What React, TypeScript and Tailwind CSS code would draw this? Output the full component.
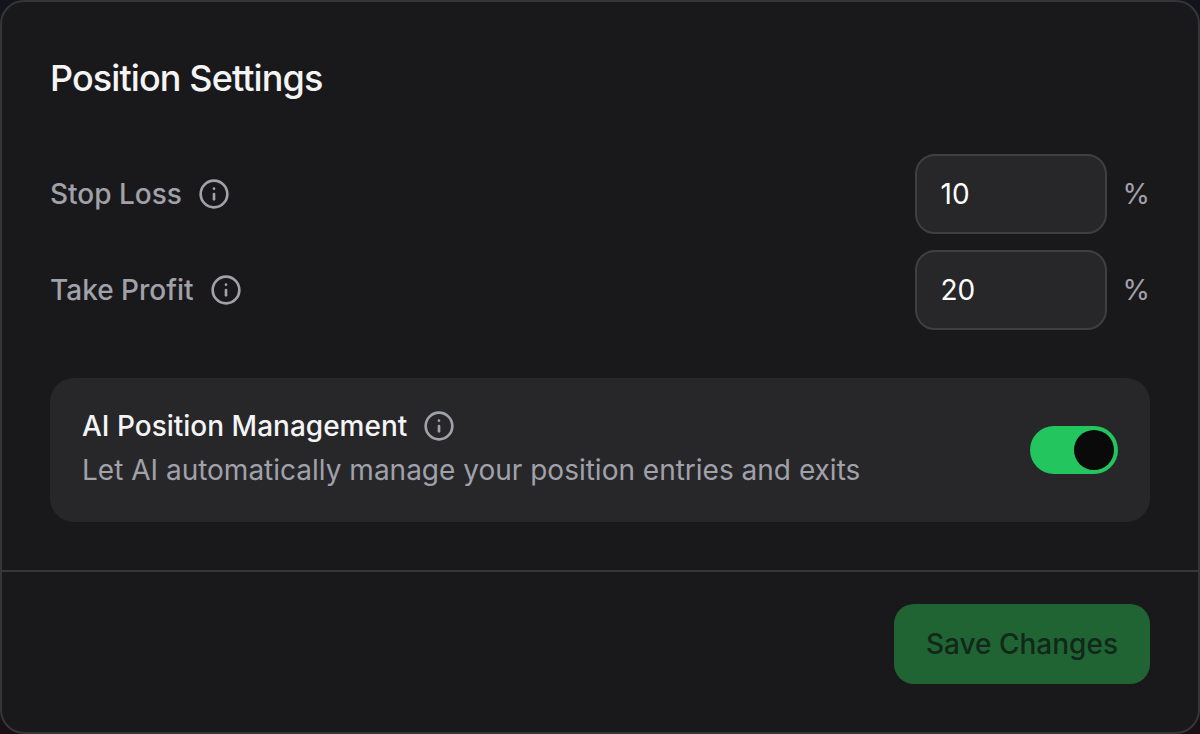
import { useState } from "react";
import { Info } from "lucide-react";

function InfoButton({ label }: { label: string }) {
  return (
    <button type="button" aria-label={label} className="shrink-0 text-[#a1a1aa]">
      <Info className="size-8" aria-hidden="true" />
    </button>
  );
}

function PercentField({
  id,
  label,
  value,
  onChange,
}: {
  id: string;
  label: string;
  value: string;
  onChange: (value: string) => void;
}) {
  return (
    <div className="flex items-center justify-between gap-8">
      <div className="flex items-center gap-4">
        <label htmlFor={id} className="font-medium text-[#a1a1aa]">
          {label}
        </label>
        <InfoButton label={`About ${label}`} />
      </div>
      <div className="flex items-center gap-4">
        <input
          id={id}
          type="text"
          inputMode="decimal"
          value={value}
          onChange={(e) => onChange(e.target.value)}
          className="h-20 w-48 rounded-[20px] border-2 border-[#3f3f42] bg-[#27272a] px-6 text-white outline-none"
        />
        <span className="text-[#a1a1aa]">%</span>
      </div>
    </div>
  );
}

export default function App() {
  const [stopLoss, setStopLoss] = useState("10");
  const [takeProfit, setTakeProfit] = useState("20");
  const [managed, setManaged] = useState(true);

  return (
    <main className="min-h-screen bg-linear-to-b from-[#14141f] to-[#1a1014] font-['Inter',sans-serif] text-[28px] leading-10">
      <form
        onSubmit={(e) => e.preventDefault()}
        className="rounded-3xl border-2 border-[#363638] bg-[#19191b]"
      >
        <div className="flex flex-col gap-12 p-12">
          <h2 className="text-4xl leading-14 font-medium tracking-tight text-zinc-100">
            Position Settings
          </h2>

          <div className="flex flex-col gap-4">
            <PercentField
              id="stop-loss"
              label="Stop Loss"
              value={stopLoss}
              onChange={setStopLoss}
            />
            <PercentField
              id="take-profit"
              label="Take Profit"
              value={takeProfit}
              onChange={setTakeProfit}
            />
          </div>

          <div className="flex items-center justify-between gap-8 rounded-3xl bg-[#27272a] p-8">
            <div className="flex flex-col gap-2">
              <div className="flex items-center gap-4">
                <label
                  htmlFor="ai-management"
                  className="leading-8 font-medium text-zinc-100"
                >
                  AI Position Management
                </label>
                <InfoButton label="About AI Position Management" />
              </div>
              <p className="text-[#a1a1aa]">
                Let AI automatically manage your position entries and exits
              </p>
            </div>
            <input
              id="ai-management"
              type="checkbox"
              role="switch"
              checked={managed}
              onChange={(e) => setManaged(e.target.checked)}
              className="flex h-12 w-22 shrink-0 cursor-pointer appearance-none items-center rounded-full bg-zinc-600 p-1 before:size-10 before:rounded-full before:bg-[#0a0a0a] before:transition-transform checked:bg-[#22c55e] checked:before:translate-x-10"
            />
          </div>
        </div>

        <div className="flex justify-end border-t-2 border-[#363638] px-12 pt-8 pb-12">
          <button
            type="submit"
            disabled
            className="h-20 rounded-[20px] bg-[#206434] px-8 font-medium text-[#12281a]"
          >
            Save Changes
          </button>
        </div>
      </form>
    </main>
  );
}
